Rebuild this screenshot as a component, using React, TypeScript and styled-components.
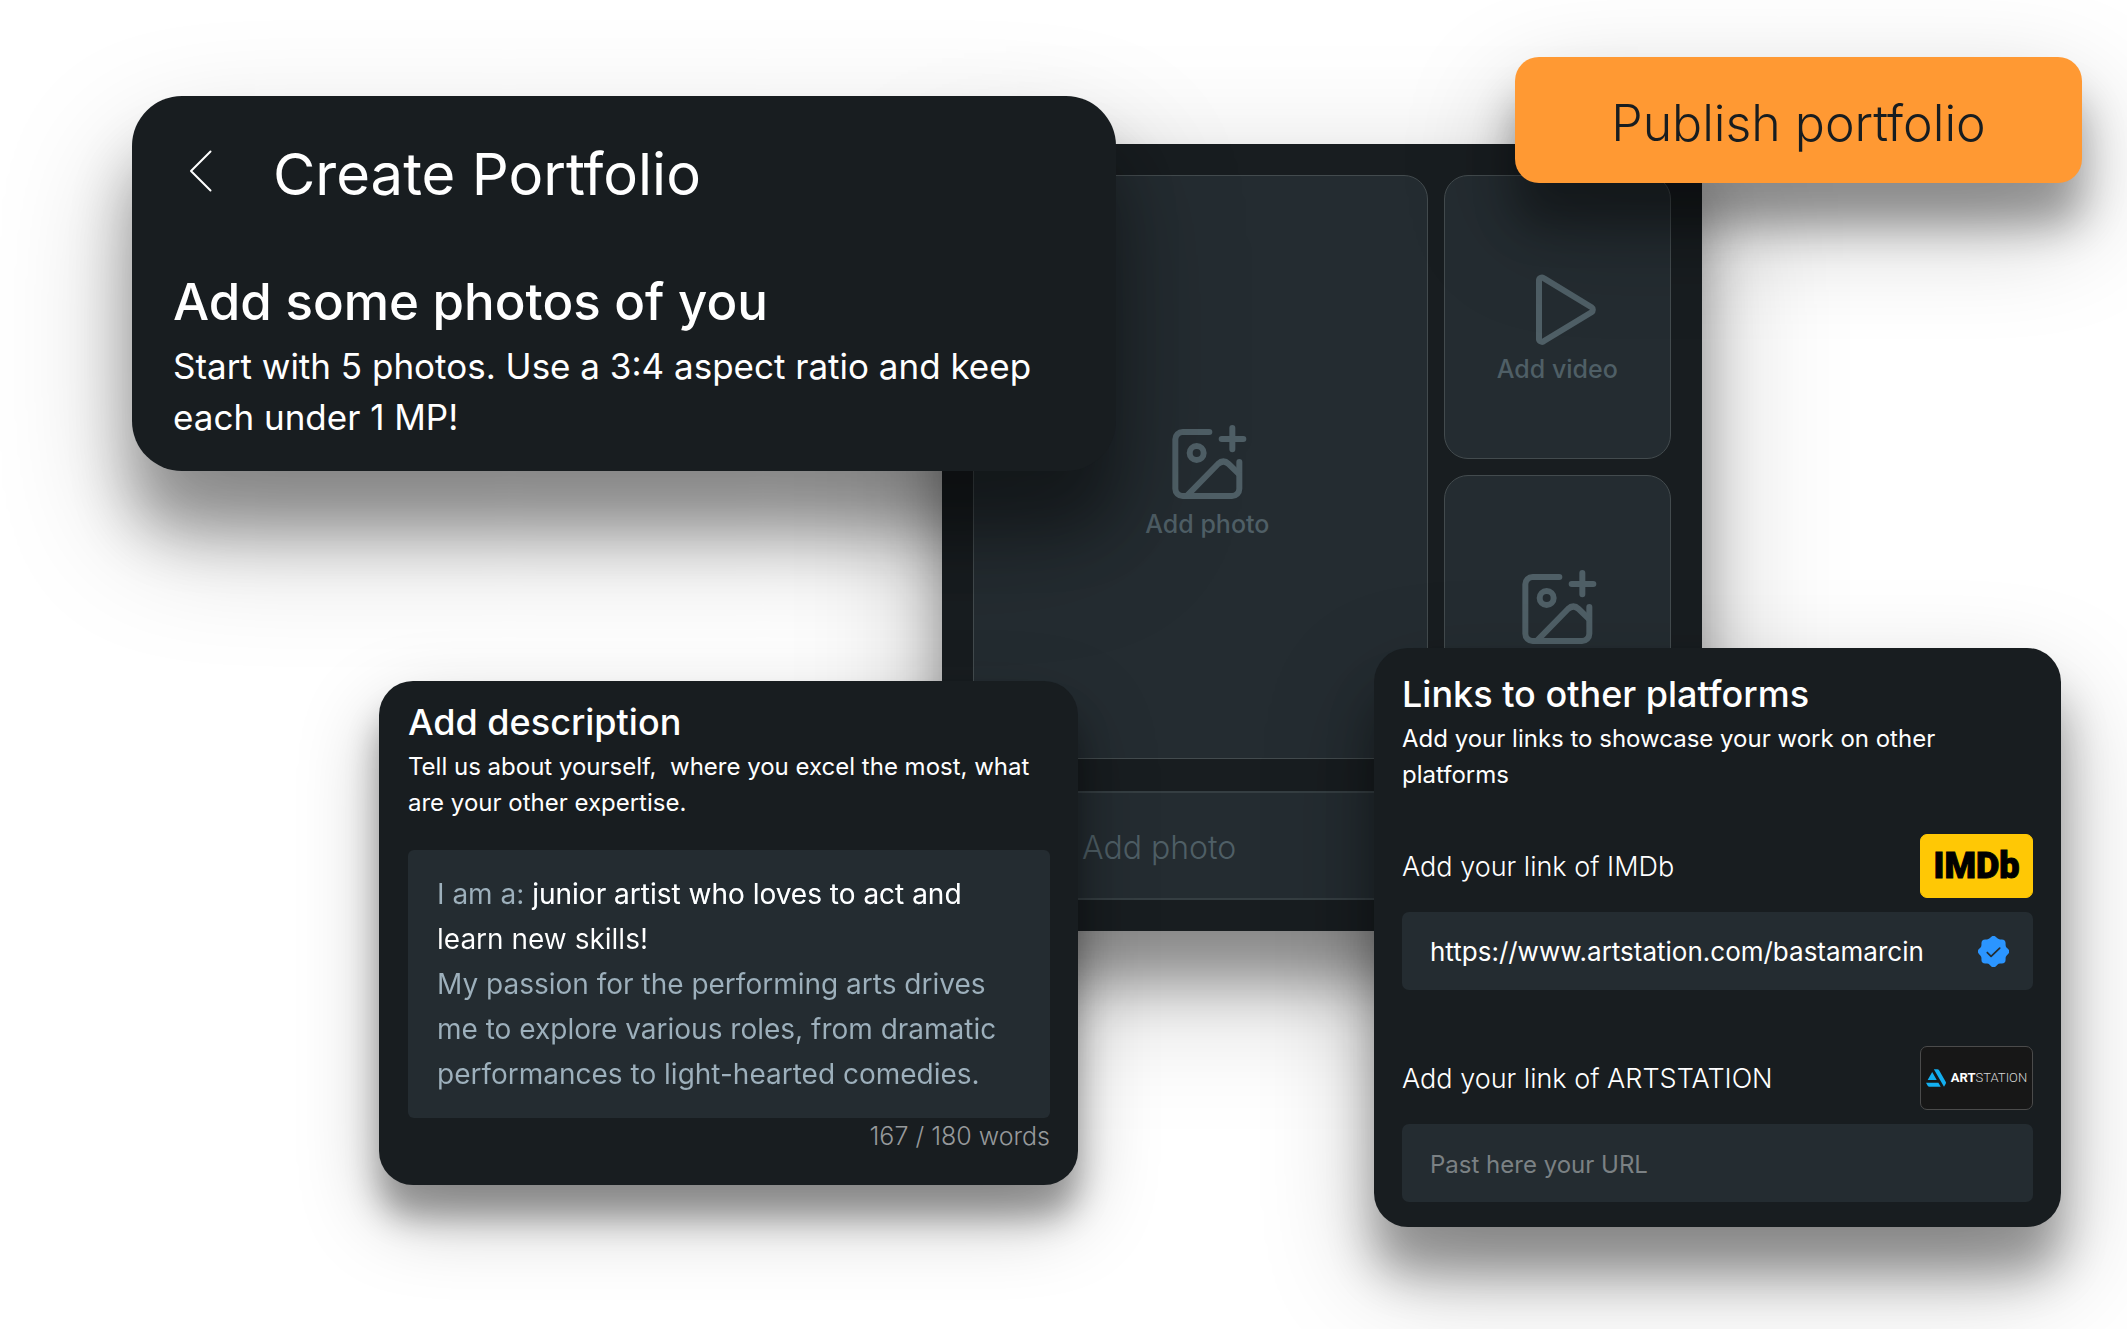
import React, { useState } from "react";
import styled, { createGlobalStyle } from "styled-components";

const color = {
  card: "#181d20",
  field: "#242c31",
  line: "#434b4e",
  faint: "#4f5f66",
  muted: "#9db0bc",
  hint: "#7b8184",
  count: "#96999b",
  accent: "#ff9933",
  verified: "#2b95ff",
};

const GlobalStyle = createGlobalStyle`
  *, *::before, *::after { box-sizing: border-box; }
  body {
    margin: 0;
    background: #ffffff;
    color: #ffffff;
    font-family: Inter, "Liberation Sans", sans-serif;
  }
  h1, h2, p { margin: 0; }
  button, input, textarea { font: inherit; color: inherit; border: 0; margin: 0; }
`;

const castShadow = (drop: number, soft: number) =>
  `0 ${drop}px ${drop}px rgba(0, 0, 0, 0.32), 0 ${drop}px ${soft}px rgba(0, 0, 0, 0.26)`;

/* The cards overlap, so each one starts at its own grid line and runs over its neighbours. */
const Stage = styled.main`
  min-height: 100vh;
  overflow: hidden;
  padding-bottom: 102px;
  display: grid;
  align-items: start;
  grid-template-columns:
    [edge] minmax(0, 132fr)
    [intro] minmax(0, 247fr)
    [about] minmax(0, 563fr)
    [gallery] minmax(0, 136fr)
    [about-end] minmax(0, 38fr)
    [intro-end] minmax(0, 258fr)
    [links] minmax(0, 141fr)
    [publish] minmax(0, 187fr)
    [gallery-end] minmax(0, 359fr)
    [links-end] minmax(0, 21fr)
    [publish-end] minmax(0, 45fr);
  grid-template-rows:
    57px [publish] 39px [intro] 48px [gallery] 504px [links] 33px [about] auto [end];
`;

const Card = styled.section<{ $area: string; $radius: number; $drop: number; $soft: number }>`
  grid-column: ${(p) => p.$area} / ${(p) => p.$area}-end;
  grid-row: ${(p) => p.$area} / end;
  border-radius: ${(p) => p.$radius}px;
  background: ${color.card};
  box-shadow: ${(p) => castShadow(p.$drop, p.$soft)};
`;

/* ---------- gallery ---------- */

const GalleryCard = styled(Card)`
  padding: 31px;
  display: flex;
  flex-direction: column;
  gap: 32px;
`;

const TileGrid = styled.div`
  display: grid;
  grid-template-columns: 2fr 1fr;
  gap: 16px;
`;

const Tile = styled.button<{ $large?: boolean }>`
  grid-row: ${(p) => (p.$large ? "span 2" : "auto")};
  aspect-ratio: ${(p) => (p.$large ? "auto" : "4 / 5")};
  padding: ${(p) => (p.$large ? "250px 0 0 14px" : "95px 0 0")};
  display: flex;
  flex-direction: column;
  align-items: center;
  justify-content: flex-start;
  gap: 6px;
  border: 1px solid ${color.line};
  border-radius: 24px;
  background: ${color.field};
  color: ${color.faint};
  font-size: 25px;
  font-weight: 500;
  line-height: 36px;
  cursor: pointer;
`;

const TileIcon = styled.svg`
  width: 74px;
  height: 74px;
  flex: none;
  fill: none;
  stroke: currentColor;
  stroke-linecap: round;
  stroke-linejoin: round;
  overflow: visible;
`;

const PhotoField = styled.input`
  width: 100%;
  height: 109px;
  padding: 3px 107px 0;
  border: 2px solid #353e42;
  border-radius: 24px;
  background: ${color.field};
  font-size: 32px;
  font-weight: 300;
  &::placeholder { color: ${color.faint}; opacity: 1; }
`;

/* ---------- intro ---------- */

const IntroCard = styled(Card)`
  padding: 42px 41px 28px;
`;

const TitleBar = styled.header`
  display: flex;
  align-items: center;
  gap: 44px;
  margin-bottom: 60px;
`;

const BackButton = styled.button`
  width: 56px;
  height: 56px;
  padding: 0 0 6px;
  display: flex;
  align-items: center;
  justify-content: center;
  background: none;
  cursor: pointer;
`;

const Title = styled.h1`
  font-size: 58px;
  font-weight: 400;
  line-height: 72px;
`;

const IntroHeading = styled.h2`
  font-size: 51px;
  font-weight: 500;
  line-height: 64px;
`;

const IntroText = styled.p`
  margin-top: 7px;
  font-size: 35px;
  line-height: 51px;
`;

/* ---------- shared by the two form cards ---------- */

const CardHeading = styled.h2`
  font-size: 36px;
  font-weight: 500;
  line-height: 44px;
`;

const CardText = styled.p`
  margin-top: 5px;
  font-size: 24px;
  line-height: 36px;
  white-space: pre-wrap;
`;

/* ---------- description ---------- */

const AboutCard = styled(Card)`
  padding: 19px 28px 31px 29px;
`;

const AboutField = styled.div`
  margin-top: 29px;
  padding: 22px 20px 21px 29px;
  border-radius: 6px;
  background: ${color.field};
`;

const AboutInput = styled.textarea`
  display: block;
  width: 100%;
  height: 225px;
  padding: 0 16px 0 0;
  resize: none;
  overflow: hidden;
  outline: 0;
  font-size: 28px;
  font-weight: 400;
  line-height: 45px;
  color: ${color.muted};
  background-color: ${color.muted};
  background-image: linear-gradient(#fff, #fff), linear-gradient(#fff, #fff);
  background-size: 100% 45px, 100% 45px;
  background-position: 92px 0, 0 45px;
  background-repeat: no-repeat;
  background-clip: text;
  -webkit-text-fill-color: transparent;
`;

const WordCount = styled.p`
  text-align: right;
  font-size: 25px;
  font-weight: 300;
  line-height: 36px;
  color: ${color.count};
`;

/* ---------- links ---------- */

const LinksCard = styled(Card)`
  padding: 24px 28px 25px;
`;

const LinkGroup = styled.div<{ $first?: boolean }>`
  margin-top: ${(p) => (p.$first ? 41 : 56)}px;
  display: flex;
  flex-direction: column;
  gap: 14px;
`;

const LinkHead = styled.div`
  display: flex;
  align-items: center;
  justify-content: space-between;
`;

const LinkLabel = styled.label`
  font-size: 27px;
  font-weight: 300;
`;

const Brand = styled.span<{ $imdb?: boolean }>`
  width: 113px;
  height: 64px;
  display: flex;
  align-items: center;
  justify-content: center;
  gap: 5px;
  border-radius: 7px;
  border: 1px solid ${(p) => (p.$imdb ? "#ffc805" : "#4b4b4b")};
  background: ${(p) => (p.$imdb ? "#ffc805" : "#171717")};
  font-family: Roboto, "Liberation Sans", sans-serif;
`;

const ImdbWord = styled.span`
  color: #000000;
  font-size: 36px;
  font-weight: 900;
  line-height: 48px;
  -webkit-text-stroke: 1px #000000;
`;

const ArtWord = styled.span`
  color: #d6d6d6;
  font-size: 13px;
  font-weight: 300;
  line-height: 18px;
  b { color: #ffffff; font-weight: 700; }
`;

const LinkField = styled.div`
  height: 78px;
  padding: 0 24px 0 28px;
  display: flex;
  align-items: center;
  gap: 16px;
  border-radius: 7px;
  background: ${color.field};
`;

const LinkInput = styled.input`
  flex: 1;
  min-width: 0;
  height: 100%;
  padding: 0;
  outline: 0;
  background: none;
  font-size: 26px;
  &::placeholder { color: ${color.hint}; font-size: 24px; opacity: 1; }
`;

/* ---------- publish ---------- */

const PublishButton = styled.button`
  grid-column: publish / publish-end;
  grid-row: publish / end;
  height: 126px;
  padding: 5px 0 0;
  border-radius: 24px;
  background: ${color.accent};
  color: ${color.card};
  font-size: 50px;
  font-weight: 300;
  box-shadow: ${castShadow(42, 110)};
  cursor: pointer;
`;

/* ---------- drawings ---------- */

const AddImageIcon = () => (
  <TileIcon viewBox="212 138 222 222" strokeWidth="18" aria-hidden="true">
    <path d="M330 156H250a22 22 0 0 0-22 22v148a22 22 0 0 0 22 22h148a22 22 0 0 0 22-22V246" />
    <path d="M367 177h65M399 144v64" />
    <circle cx="292" cy="219" r="21" />
    <path d="M264 346l92-94q16-15 32 0l32 31" strokeLinecap="butt" />
  </TileIcon>
);

const PlayIcon = () => (
  <TileIcon viewBox="-1 0 74 74" strokeWidth="6" aria-hidden="true">
    <path d="M18 10a3 3 0 0 1 5-2.6L70.5 36.3a3 3 0 0 1 0 5L23 70a3 3 0 0 1-5-2.6Z" />
  </TileIcon>
);

const ChevronIcon = () => (
  <svg width="24" height="42" viewBox="0 0 24 42" fill="none" stroke="#fff" strokeWidth="2" strokeLinecap="round" strokeLinejoin="round" aria-hidden="true">
    <path d="M21.500 1.500L2 21l19.500 19.500" />
  </svg>
);

const VerifiedIcon = () => (
  <svg width="31" height="31" viewBox="3 3 18 18" role="img" aria-label="Verified">
    <path
      fill={color.verified}
      d="M5 7.200a2.200 2.200 0 0 1 2.200-2.200h1a2.200 2.200 0 0 0 1.550-.640l.7-.7a2.200 2.200 0 0 1 3.120 0l.7.7c.412.410.970.640 1.550.640h1a2.200 2.200 0 0 1 2.200 2.200v1c0 .580.230 1.138.640 1.550l.7.7a2.200 2.200 0 0 1 0 3.120l-.7.7a2.200 2.200 0 0 0-.640 1.550v1a2.200 2.200 0 0 1-2.200 2.200h-1a2.200 2.200 0 0 0-1.550.640l-.7.7a2.200 2.200 0 0 1-3.120 0l-.7-.7a2.200 2.200 0 0 0-1.550-.640h-1a2.200 2.200 0 0 1-2.200-2.200v-1a2.200 2.200 0 0 0-.640-1.550l-.7-.7a2.200 2.200 0 0 1 0-3.120l.7-.7a2.200 2.200 0 0 0 .640-1.550z"
    />
    <path d="M8.400 12.600l2.200 2.200 5-4.800" fill="none" stroke={color.field} strokeWidth="1" strokeLinecap="round" strokeLinejoin="round" />
  </svg>
);

const ArtMark = styled.svg`
  width: 20px;
  height: 20px;
  flex: none;
  fill: #13aff0;
`;

const ArtStationMark = () => (
  <ArtMark viewBox="0 0 24 24" aria-hidden="true">
    <path d="M0 17.723l2.027 3.505h.001a2.424 2.424 0 0 0 2.164 1.333h13.457l-2.792-4.838H0zm24 .025c0-.484-.143-.935-.388-1.314L15.728 2.728a2.424 2.424 0 0 0-2.142-1.289H9.419L21.598 22.540l1.920-3.325c.378-.637.482-.919.482-1.467zm-11.129-3.462L7.428 4.858l-5.444 9.428h10.887z" />
  </ArtMark>
);

const initialAbout =
  "I am a: junior artist who loves to act and learn new skills!\n" +
  "My passion for the performing arts drives me to explore various roles, from dramatic performances to light-hearted comedies.";

export default function App() {
  const [about, setAbout] = useState(initialAbout);
  const [imdb, setImdb] = useState("https://www.artstation.com/bastamarcin");
  const [artstation, setArtstation] = useState("");

  return (
    <>
      <GlobalStyle />
      <Stage>
        <GalleryCard $area="gallery" $radius={0} $drop={50} $soft={130} aria-label="Gallery">
          <TileGrid>
            <Tile type="button" $large>
              <AddImageIcon />
              Add photo
            </Tile>
            <Tile type="button">
              <PlayIcon />
              Add video
            </Tile>
            <Tile type="button" aria-label="Add another photo">
              <AddImageIcon />
            </Tile>
          </TileGrid>
          <PhotoField placeholder="Add photo" aria-label="Photo" />
        </GalleryCard>

        <IntroCard $area="intro" $radius={50} $drop={60} $soft={130}>
          <TitleBar>
            <BackButton type="button" aria-label="Back">
              <ChevronIcon />
            </BackButton>
            <Title>Create Portfolio</Title>
          </TitleBar>
          <IntroHeading>Add some photos of you</IntroHeading>
          <IntroText>Start with 5 photos. Use a 3:4 aspect ratio and keep each under 1 MP!</IntroText>
        </IntroCard>

        <AboutCard $area="about" $radius={34} $drop={32} $soft={80}>
          <CardHeading>Add description</CardHeading>
          <CardText id="about-hint">
            {"Tell us about yourself,  where you excel the most, what are your other expertise."}
          </CardText>
          <AboutField>
            <AboutInput
              aria-label="Description"
              aria-describedby="about-hint"
              spellCheck={false}
              value={about}
              onChange={(e) => setAbout(e.target.value)}
            />
          </AboutField>
          <WordCount>167 / 180 words</WordCount>
        </AboutCard>

        <LinksCard $area="links" $radius={34} $drop={46} $soft={110}>
          <CardHeading>Links to other platforms</CardHeading>
          <CardText>Add your links to showcase your work on other platforms</CardText>
          <LinkGroup $first>
            <LinkHead>
              <LinkLabel htmlFor="imdb-link">Add your link of IMDb</LinkLabel>
              <Brand $imdb>
                <ImdbWord>IMDb</ImdbWord>
              </Brand>
            </LinkHead>
            <LinkField>
              <LinkInput id="imdb-link" value={imdb} onChange={(e) => setImdb(e.target.value)} />
              <VerifiedIcon />
            </LinkField>
          </LinkGroup>
          <LinkGroup>
            <LinkHead>
              <LinkLabel htmlFor="artstation-link">Add your link of ARTSTATION</LinkLabel>
              <Brand>
                <ArtStationMark />
                <ArtWord>
                  <b>ART</b>STATION
                </ArtWord>
              </Brand>
            </LinkHead>
            <LinkField>
              <LinkInput
                id="artstation-link"
                placeholder="Past here your URL"
                value={artstation}
                onChange={(e) => setArtstation(e.target.value)}
              />
            </LinkField>
          </LinkGroup>
        </LinksCard>

        <PublishButton type="button">Publish portfolio</PublishButton>
      </Stage>
    </>
  );
}
